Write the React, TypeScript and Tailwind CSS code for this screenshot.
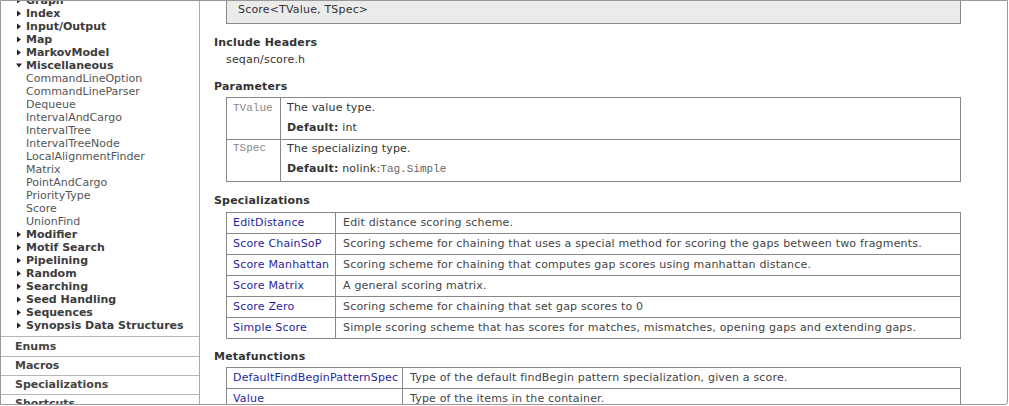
import React from 'react';

const font = { fontFamily: '"DejaVu Sans", Verdana, sans-serif' };
const mono = { fontFamily: '"Liberation Mono", "Courier New", monospace' };

type NavItem = { label: string; open?: boolean; children?: string[] };

const groups: NavItem[] = [
  { label: 'Graph' },
  { label: 'Index' },
  { label: 'Input/Output' },
  { label: 'Map' },
  { label: 'MarkovModel' },
  {
    label: 'Miscellaneous',
    open: true,
    children: [
      'CommandLineOption',
      'CommandLineParser',
      'Dequeue',
      'IntervalAndCargo',
      'IntervalTree',
      'IntervalTreeNode',
      'LocalAlignmentFinder',
      'Matrix',
      'PointAndCargo',
      'PriorityType',
      'Score',
      'UnionFind',
    ],
  },
  { label: 'Modifier' },
  { label: 'Motif Search' },
  { label: 'Pipelining' },
  { label: 'Random' },
  { label: 'Searching' },
  { label: 'Seed Handling' },
  { label: 'Sequences' },
  { label: 'Synopsis Data Structures' },
];

const specializations = [
  ['EditDistance', 'Edit distance scoring scheme.'],
  ['Score ChainSoP', 'Scoring scheme for chaining that uses a special method for scoring the gaps between two fragments.'],
  ['Score Manhattan', 'Scoring scheme for chaining that computes gap scores using manhattan distance.'],
  ['Score Matrix', 'A general scoring matrix.'],
  ['Score Zero', 'Scoring scheme for chaining that set gap scores to 0'],
  ['Simple Score', 'Simple scoring scheme that has scores for matches, mismatches, opening gaps and extending gaps.'],
];

const metafunctions = [
  ['DefaultFindBeginPatternSpec', 'Type of the default findBegin pattern specialization, given a score.'],
  ['Value', 'Type of the items in the container.'],
];

const Triangle: React.FC<{ open?: boolean }> = ({ open }) => (
  <svg width="6" height="7" viewBox="0 0 6 7" className="mr-[4px] shrink-0">
    {open ? <path d="M0 1.5 L6 1.5 L3 5.5 Z" fill="#222" /> : <path d="M1 0.5 L5 3.5 L1 6.5 Z" fill="#222" />}
  </svg>
);

const Sidebar: React.FC = () => (
  <div className="w-[199px] shrink-0 border-r border-[#aaa] text-[11px] flex flex-col">
    <ul className="mt-[-7px] pl-[15px] leading-[13px]">
      {groups.map((g) => (
        <li key={g.label}>
          <div className="flex items-center font-bold text-[#3c3c3c]">
            <Triangle open={g.open} />
            {g.label}
          </div>
          {g.children && (
            <ul className="pl-[10px] text-[#555]">
              {g.children.map((c) => (
                <li key={c}>{c}</li>
              ))}
            </ul>
          )}
        </li>
      ))}
    </ul>
    <div className="mt-[4px] font-bold text-[#444]">
      <div className="border-t border-[#b5b5b5] h-[20px] leading-[19px] pl-[14px]">Enums</div>
      <div className="border-t border-[#b5b5b5] h-[19px] leading-[18px] pl-[14px]">Macros</div>
      <div className="border-t border-[#b5b5b5] h-[19px] leading-[18px] pl-[14px]">Specializations</div>
      <div className="border-t border-[#b5b5b5] h-[19px] leading-[18px] pl-[14px]">Shortcuts</div>
    </div>
  </div>
);

const Heading: React.FC<{ children: React.ReactNode; className?: string }> = ({ children, className }) => (
  <h3 className={`font-bold text-[#333] leading-[14px] ${className ?? ''}`}>{children}</h3>
);

const LinkTable: React.FC<{ rows: string[][]; firstCol: string }> = ({ rows, firstCol }) => (
  <table className="ml-[12px] w-[735px] border border-[#888]">
    <tbody>
      {rows.map(([name, desc]) => (
        <tr key={name} className="h-[21px]">
          <td className={`${firstCol} border border-[#888] pl-[6px] text-[#1f1f9c] whitespace-nowrap`}>{name}</td>
          <td className="border border-[#888] pl-[7px] text-[#444]">{desc}</td>
        </tr>
      ))}
    </tbody>
  </table>
);

const Main: React.FC = () => (
  <div className="flex-1 min-w-0 overflow-hidden pl-[14px] text-[11px] tracking-[0.18px]">
    <div className="mt-[-8px] ml-[12px] w-[735px] h-[31px] border border-[#888] bg-[#ebebeb] pl-[11px] pt-[9px] text-[#333] leading-[14px]">
      Score&lt;TValue, TSpec&gt;
    </div>
    <Heading className="mt-[12px]">Include Headers</Heading>
    <div className="ml-[12px] mt-[3px] leading-[14px] text-[#333]">seqan/score.h</div>
    <Heading className="mt-[13px]">Parameters</Heading>
    <table className="ml-[12px] mt-[3px] w-[735px] border border-[#888]">
      <tbody>
        <tr>
          <td className="w-[54px] border border-[#888] align-top pl-[6px] pt-[3px] leading-[14px] text-[#888] tracking-normal" style={mono}>
            TValue
          </td>
          <td className="border border-[#888] align-top pl-[6px] pb-[1px] text-[#333]">
            <div className="leading-[20px]">The value type.</div>
            <div className="leading-[20px]">
              <b>Default:</b> int
            </div>
          </td>
        </tr>
        <tr>
          <td className="border border-[#888] align-top pl-[6px] pt-[1px] leading-[14px] text-[#888] tracking-normal" style={mono}>
            TSpec
          </td>
          <td className="border border-[#888] align-top pl-[6px] pb-[1px] text-[#333]">
            <div className="leading-[18px]">The specializing type.</div>
            <div className="leading-[22px]">
              <b>Default:</b> nolink:
              <span className="text-[#666] tracking-normal" style={mono}>Tag.Simple</span>
            </div>
          </td>
        </tr>
      </tbody>
    </table>
    <Heading className="mt-[12px]">Specializations</Heading>
    <div className="mt-[4px]">
      <LinkTable rows={specializations} firstCol="w-[109px]" />
    </div>
    <Heading className="mt-[11px]">Metafunctions</Heading>
    <div className="mt-[3px]">
      <LinkTable rows={metafunctions} firstCol="w-[176px]" />
    </div>
  </div>
);

export default function App() {
  return (
    <div className="w-[1009px] h-[406px] bg-white" style={font}>
      <div className="flex w-[1008px] h-[405px] overflow-hidden border border-[#999] rounded-br-[3px] bg-white">
        <Sidebar />
        <Main />
      </div>
    </div>
  );
}
